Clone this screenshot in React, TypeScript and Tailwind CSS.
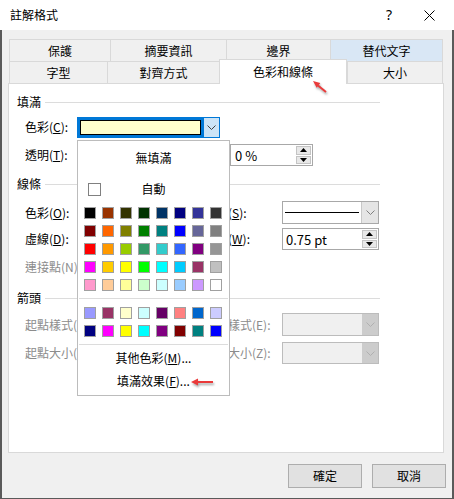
import React from 'react';

const row1: [string, number, boolean][] = [
  ['保護', 101, false],
  ['摘要資訊', 116, false],
  ['邊界', 104, false],
  ['替代文字', 113, true],
];

const row2: [string, number, boolean][] = [
  ['字型', 98, false],
  ['對齊方式', 112, false],
  ['色彩和線條', 128, true],
  ['大小', 96, false],
];

const palette = [
  ['#000000', '#993300', '#333300', '#003300', '#003366', '#000080', '#333399', '#333333'],
  ['#800000', '#FF6600', '#808000', '#008000', '#008080', '#0000FF', '#666699', '#808080'],
  ['#FF0000', '#FF9900', '#99CC00', '#339966', '#33CCCC', '#3366FF', '#800080', '#969696'],
  ['#FF00FF', '#FFCC00', '#FFFF00', '#00FF00', '#00FFFF', '#00CCFF', '#993366', '#C0C0C0'],
  ['#FF99CC', '#FFCC99', '#FFFF99', '#CCFFCC', '#CCFFFF', '#99CCFF', '#CC99FF', '#FFFFFF'],
];

const recent = [
  ['#9999FF', '#993366', '#FFFFCC', '#CCFFFF', '#660066', '#FF8080', '#0066CC', '#CCCCFF'],
  ['#000080', '#FF00FF', '#FFFF00', '#00FFFF', '#800080', '#800000', '#008080', '#0000FF'],
];

function Chevron({ color = '#606060' }: { color?: string }) {
  return (
    <svg width="9" height="5" viewBox="0 0 9 5">
      <path d="M0.5 0.5L4.5 4.5L8.5 0.5" fill="none" stroke={color} />
    </svg>
  );
}

function SpinButtons() {
  return (
    <div className="flex flex-col w-[17px] h-full p-[1px] gap-[1px]">
      <div className="flex-1 flex items-center justify-center bg-[#e8e8e8] border border-[#c4c4c4]">
        <svg width="7" height="4" viewBox="0 0 7 4">
          <path d="M0 4L3.5 0L7 4Z" fill="#000" />
        </svg>
      </div>
      <div className="flex-1 flex items-center justify-center bg-[#e8e8e8] border border-[#c4c4c4]">
        <svg width="7" height="4" viewBox="0 0 7 4">
          <path d="M0 0L3.5 4L7 0Z" fill="#000" />
        </svg>
      </div>
    </div>
  );
}

function Heading({ text }: { text: string }) {
  return (
    <div className="flex items-center h-[14px] w-[363px]">
      <span>{text}</span>
      <div className="flex-1 h-px bg-[#dcdcdc] ml-[4px]" />
    </div>
  );
}

function DisabledCombo() {
  return (
    <div className="flex w-[97px] h-full border border-[#bcbcbc] bg-[#f0f0f0]">
      <div className="flex-1" />
      <div className="w-[16px] bg-[#cccccc] flex items-center justify-center">
        <Chevron color="#b0b0b0" />
      </div>
    </div>
  );
}

export default function App() {
  return (
    <div className="relative w-[454px] h-[499px] flex flex-col bg-white text-[12px] leading-none text-black font-['Microsoft_JhengHei_UI','Noto_Sans_CJK_TC',sans-serif]">
      {/* Title bar */}
      <div className="h-[30px] flex items-center bg-white shrink-0">
        <span className="ml-[10px] text-[12px]">註解格式</span>
        <span className="ml-auto mr-[32px] text-[14px] font-['Segoe_UI','Noto_Sans',sans-serif]">?</span>
        <svg width="11" height="11" viewBox="0 0 11 11" className="mr-[19px]">
          <path d="M0.5 0.5L10.5 10.5M10.5 0.5L0.5 10.5" stroke="#000" strokeWidth="1" />
        </svg>
      </div>

      {/* Body */}
      <div className="flex-1 flex flex-col bg-[#f0f0f0] border-l-2 border-r-2 border-b border-[#5a5a5a] pt-[9px]">
        {/* Tabs */}
        <div className="flex ml-[7px] h-[22px]">
          {row1.map(([t, w, sel], i) => (
            <div
              key={t}
              style={{ width: w }}
              className={`flex items-center justify-center border-t border-l border-[#d9d9d9] ${i === 3 ? 'border-r' : ''} ${sel ? 'bg-[#d9e7f5] border-[#c3d6ea]' : 'bg-[#f0f0f0]'}`}
            >
              {t}
            </div>
          ))}
        </div>
        <div className="flex ml-[7px] h-[22px] items-end">
          {row2.map(([t, w, sel], i) =>
            sel ? (
              <div
                key={t}
                style={{ width: w }}
                className="relative z-10 h-[25px] -mb-px flex items-center justify-center bg-white border-t border-l border-r border-[#d9d9d9] pb-[1px]"
              >
                {t}
              </div>
            ) : (
              <div
                key={t}
                style={{ width: w }}
                className={`h-[22px] flex items-center justify-center border-t border-l border-[#d9d9d9] ${i === 3 ? 'border-r' : ''}`}
              >
                {t}
              </div>
            )
          )}
        </div>

        {/* Panel */}
        <div className="relative w-[436px] h-[370px] ml-[6px] bg-white border border-[#d9d9d9] pl-[8px] pt-[11px] flex flex-col shrink-0">
          <Heading text="填滿" />

          <div className="flex items-center h-[22px] mt-[7px] ml-[8px]">
            <span className="w-[52px] whitespace-nowrap">
              色彩(<u>C</u>):
            </span>
            <div className="flex w-[143px] h-[21px] border border-[#0078d7]">
              <div className="flex-1 bg-[#0078d7] p-[2px]">
                <div className="w-full h-full border border-black bg-[#ffffcc]" />
              </div>
              <div className="w-[16px] bg-[#cce4f7] border-l border-[#0078d7] flex items-center justify-center">
                <Chevron color="#404040" />
              </div>
            </div>
          </div>

          <div className="flex items-center h-[22px] mt-[6px] ml-[8px]">
            <span className="w-[52px] whitespace-nowrap">
              透明(<u>T</u>):
            </span>
            <div className="w-[153px] h-[4px] bg-[#e0e0e0]" />
            <div className="flex w-[83px] h-[22px] border border-[#a8a8a8] bg-white">
              <span className="flex-1 flex items-center pl-[4px] text-[13px]">0 %</span>
              <SpinButtons />
            </div>
          </div>

          <div className="mt-[11px]">
            <Heading text="線條" />
          </div>

          <div className="flex items-center h-[23px] mt-[10px] ml-[8px]">
            <span className="w-[52px] whitespace-nowrap">
              色彩(<u>O</u>):
            </span>
            <div className="w-[110px] h-full border border-[#a8a8a8]" />
            <span className="w-[78px] ml-[17px] whitespace-nowrap">
              樣式(<u>S</u>):
            </span>
            <div className="flex w-[97px] h-full border border-[#a8a8a8] bg-white">
              <div className="flex-1 flex items-center px-[2px]">
                <div className="w-full h-px bg-black" />
              </div>
              <div className="w-[17px] bg-[#e5e5e5] border-l border-[#c8c8c8] flex items-center justify-center">
                <Chevron color="#808080" />
              </div>
            </div>
          </div>

          <div className="flex items-center h-[22px] mt-[4px] ml-[8px]">
            <span className="w-[52px] whitespace-nowrap">
              虛線(<u>D</u>):
            </span>
            <div className="w-[110px] h-full border border-[#a8a8a8]" />
            <span className="w-[78px] ml-[17px] whitespace-nowrap">
              寬度(<u>W</u>):
            </span>
            <div className="flex w-[97px] h-full border border-[#a8a8a8] bg-white">
              <span className="flex-1 flex items-center pl-[3px] text-[13px]">0.75 pt</span>
              <SpinButtons />
            </div>
          </div>

          <div className="flex items-center h-[22px] mt-[6px] ml-[8px] text-[#8c8c8c]">
            <span className="whitespace-nowrap">連接點(N)</span>
          </div>

          <div className="mt-[13px]">
            <Heading text="箭頭" />
          </div>

          <div className="flex items-center h-[23px] mt-[8px] ml-[8px] text-[#8c8c8c]">
            <span className="w-[179px] whitespace-nowrap">起點樣式(B):</span>
            <span className="w-[78px] whitespace-nowrap">終點樣式(E):</span>
            <DisabledCombo />
          </div>

          <div className="flex items-center h-[22px] mt-[6px] ml-[8px] text-[#8c8c8c]">
            <span className="w-[179px] whitespace-nowrap">起點大小(I):</span>
            <span className="w-[78px] whitespace-nowrap">終點大小(Z):</span>
            <DisabledCombo />
          </div>

          {/* Colour drop-down popup */}
          <div className="absolute left-[68px] top-[56px] z-20 w-[153px] h-[256px] bg-white border border-[#bcbcbc] flex flex-col pt-[6px]">
            <div className="h-[22px] flex items-center justify-center">無填滿</div>
            <div className="h-[22px] flex items-center mt-[9px]">
              <div className="ml-[10px] w-[13px] h-[13px] border border-[#808080] bg-white" />
              <span className="flex-1 text-center mr-[23px]">自動</span>
            </div>
            <div className="grid grid-cols-[repeat(8,12px)] gap-[6px] pl-[6px] mt-[7px]">
              {palette.flat().map((c, i) => (
                <div key={i} className="w-[12px] h-[12px] border border-[#a0a0a0]" style={{ backgroundColor: c }} />
              ))}
            </div>
            <div className="h-px bg-[#dcdcdc] mx-[1px] mt-[7px]" />
            <div className="grid grid-cols-[repeat(8,12px)] gap-[6px] pl-[6px] mt-[8px]">
              {recent.flat().map((c, i) => (
                <div key={i} className="w-[12px] h-[12px] border border-[#a0a0a0]" style={{ backgroundColor: c }} />
              ))}
            </div>
            <div className="h-px bg-[#dcdcdc] mx-[1px] mt-[7px]" />
            <div className="h-[22px] flex items-center justify-center mt-[2px] whitespace-nowrap">
              其他色彩(<u>M</u>)...
            </div>
            <div className="h-[22px] flex items-center justify-center mt-[1px] whitespace-nowrap">
              填滿效果(<u>F</u>)...
            </div>
          </div>
        </div>

        {/* Buttons */}
        <div className="flex justify-end gap-[10px] pr-[6px] mt-[11px]">
          <button className="w-[74px] h-[24px] bg-[#e1e1e1] border border-[#adadad] flex items-center justify-center">
            確定
          </button>
          <button className="w-[74px] h-[24px] bg-[#e1e1e1] border border-[#adadad] flex items-center justify-center">
            取消
          </button>
        </div>
      </div>

      {/* Red annotation arrows */}
      <svg
        width="454"
        height="499"
        viewBox="0 0 454 499"
        className="absolute inset-0 z-30 pointer-events-none drop-shadow-[1px_2px_1px_rgba(0,0,0,0.35)]"
      >
        <line x1="326" y1="92" x2="318" y2="85.5" stroke="#ea3a3a" strokeWidth="2" />
        <polygon points="313,81 320.3,82.9 316.7,87.7" fill="#ea3a3a" />
        <line x1="213" y1="382" x2="197" y2="382" stroke="#ea3a3a" strokeWidth="2" />
        <polygon points="191,382 198,378.5 198,385.5" fill="#ea3a3a" />
      </svg>
    </div>
  );
}
